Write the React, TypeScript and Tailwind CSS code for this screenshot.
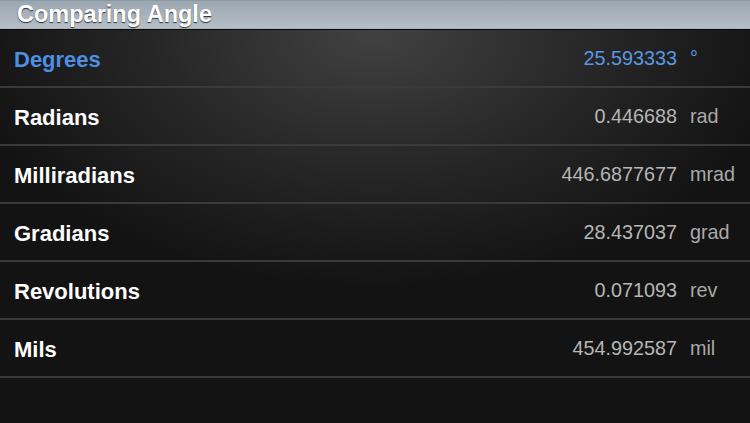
const rows = [
  { label: "Degrees", value: "25.593333", unit: "°", active: true },
  { label: "Radians", value: "0.446688", unit: "rad" },
  { label: "Milliradians", value: "446.6877677", unit: "mrad" },
  { label: "Gradians", value: "28.437037", unit: "grad" },
  { label: "Revolutions", value: "0.071093", unit: "rev" },
  { label: "Mils", value: "454.992587", unit: "mil" },
];

const App = () => {
  return (
    <div className="h-[423px] w-[750px] overflow-hidden bg-[radial-gradient(ellipse_55%_60%_at_50%_8%,#414141_0%,#262626_55%,#131313_100%)] font-['Liberation_Sans',Arial,sans-serif]">
      <div className="flex h-[29px] items-center border-t border-[#8d99a3] bg-gradient-to-b from-[#9aa6b0] to-[#b7bfc7] px-[17px] shadow-[inset_0_-1px_0_#a7b0b8]">
        <h1 className="text-[23.5px] font-bold leading-none text-white [text-shadow:0_1px_1px_rgba(0,0,0,0.75)]">
          Comparing Angle
        </h1>
      </div>
      <div className="border-t border-[#0b0b0b]">
        {rows.map((r) => (
          <div
            key={r.label}
            className="flex h-[58px] items-center border-b-2 border-[#3a3a3a] pl-[14px] pt-[2px]"
          >
            <span
              className={`flex-1 text-[22px] font-bold ${r.active ? "text-[#4d8fe3]" : "text-white"}`}
            >
              {r.label}
            </span>
            <span
              className={`text-[19.8px] ${r.active ? "text-[#5a97e3]" : "text-[#b6b6b6]"}`}
            >
              {r.value}
            </span>
            <span
              className={`ml-[13px] w-[60px] text-[19.8px] ${r.active ? "text-[#5a97e3]" : "text-[#a9a9a9]"}`}
            >
              {r.unit}
            </span>
          </div>
        ))}
      </div>
    </div>
  );
};

export default App;
